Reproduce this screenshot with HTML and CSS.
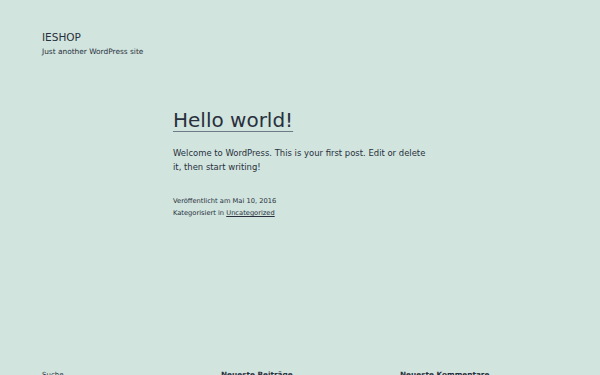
FILE: index.html
```html
<!DOCTYPE html>
<html lang="de">
<head>
<meta charset="utf-8"/>
<meta content="width=device-width, initial-scale=1.0" name="viewport"/>
<title>IESHOP</title>
<link rel="stylesheet" href="styles.css">
</head>
<body>
<header class="site-header">
  <p class="site-title">IESHOP</p>
  <p class="site-description">Just another WordPress site</p>
</header>
<main class="site-main">
  <article class="post">
    <h1 class="entry-title"><a href="#">Hello world!</a></h1>
    <div class="entry-content">
      <p>Welcome to WordPress. This is your first post. Edit or delete it, then start writing!</p>
    </div>
    <footer class="entry-footer">
      <div>Veröffentlicht am Mai 10, 2016</div>
      <div>Kategorisiert in <a href="#">Uncategorized</a></div>
    </footer>
  </article>
</main>
<aside class="widget-area">
  <div class="widget">Suche</div>
  <div class="widget widget-title">Neueste Beiträge</div>
  <div class="widget widget-title">Neueste Kommentare</div>
</aside>
</body>
</html>
```

FILE: styles.css
```css
body {
  margin: 0;
  background: #d1e4dd;
  color: #28303d;
  font-family: "DejaVu Sans", sans-serif;
  overflow: hidden;
  height: 375px;
}
a {
  color: #28303d;
}
.site-header {
  padding: 30px 42px 0;
}
.site-title {
  margin: 0;
  font-size: 10.5px;
  line-height: 14px;
}
.site-description {
  margin: 2px 0 0;
  font-size: 7.4px;
  line-height: 12px;
}
.site-main {
  padding: 49px 0 0 173px;
  width: 256px;
}
.entry-title {
  margin: 0;
  font-size: 20px;
  font-weight: normal;
  line-height: 26px;
}
.entry-title a {
  text-decoration: underline;
  text-decoration-color: #6e7a84;
  text-decoration-thickness: 1px;
  text-underline-offset: 4px;
}
.entry-content p {
  margin: 13px 0 0;
  font-size: 8.45px;
  line-height: 14px;
}
.entry-footer {
  margin-top: 21px;
  font-size: 6.7px;
  line-height: 12px;
}
.widget-area {
  display: grid;
  grid-template-columns: 179px 179px 1fr;
  padding: 0 42px;
  margin-top: 151px;
  font-size: 7px;
  line-height: 10px;
}
.widget-title {
  font-weight: bold;
  font-size: 7.3px;
}
```
